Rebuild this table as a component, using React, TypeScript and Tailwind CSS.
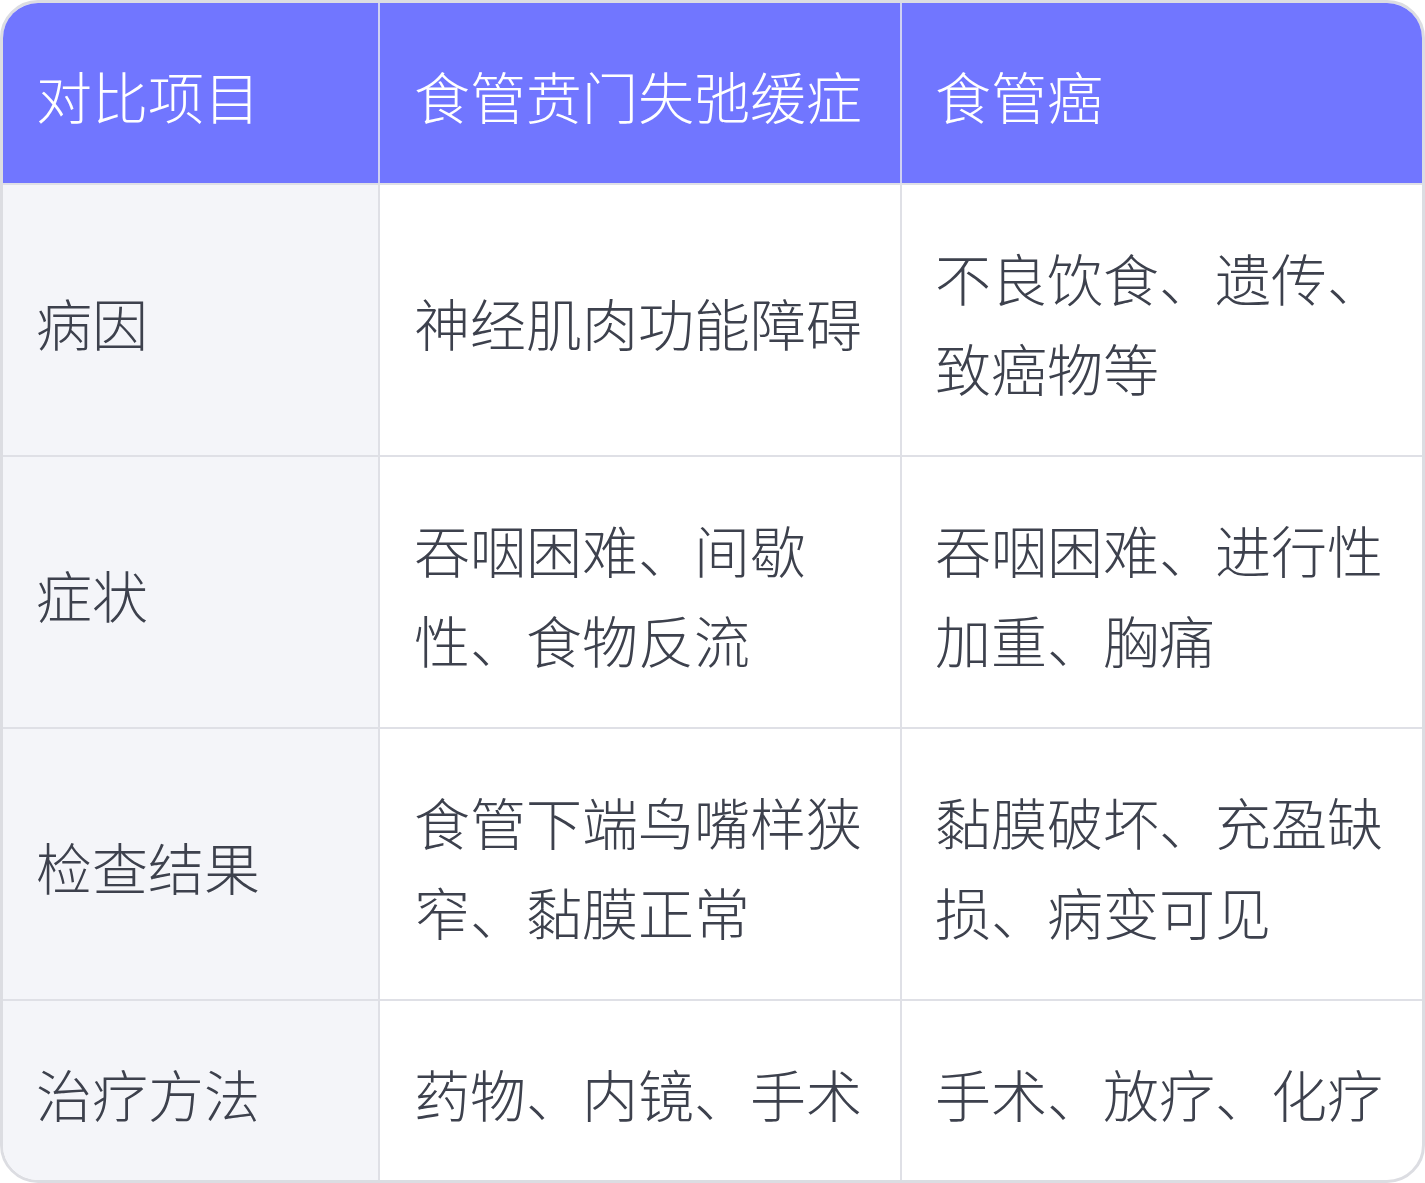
import React from "react";

const rows: [string, string, string][] = [
  ["病因", "神经肌肉功能障碍", "不良饮食、遗传、致癌物等"],
  ["症状", "吞咽困难、间歇性、食物反流", "吞咽困难、进行性加重、胸痛"],
  ["检查结果", "食管下端鸟嘴样狭窄、黏膜正常", "黏膜破坏、充盈缺损、病变可见"],
  ["治疗方法", "药物、内镜、手术", "手术、放疗、化疗"],
];

export default function App() {
  return (
    <div
      className="w-[1425px] h-[1183px] bg-white"
      style={{ fontFamily: '"Noto Sans CJK SC", "Noto Sans", sans-serif' }}
    >
      <div className="h-full border-[3px] border-[#dcdde2] rounded-[38px] overflow-hidden grid grid-cols-[375px_2px_520px_2px_1fr] grid-rows-[180px_2px_270px_2px_270px_2px_270px_2px_1fr] text-[56px] leading-[90px] font-light">
        <div className="bg-[#7176ff] text-white flex items-center pl-[33px] pt-[4px]">对比项目</div>
        <div className="bg-[#cfd1f3]" />
        <div className="bg-[#7176ff] text-white flex items-center pl-[34px] pt-[4px]">食管贲门失弛缓症</div>
        <div className="bg-[#cfd1f3]" />
        <div className="bg-[#7176ff] text-white flex items-center pl-[33px] pt-[4px]">食管癌</div>
        {rows.map((r, i) => (
          <React.Fragment key={i}>
            <div className="col-span-5 bg-[#dfe0e6]" />
            <div className="bg-[#f4f5f9] text-[#3d414d] flex items-center pl-[33px] pt-[4px]">{r[0]}</div>
            <div className="bg-[#dfe0e6]" />
            <div className="text-[#3d414d] flex items-center pl-[34px] pr-[30px] pt-[4px]">
              <span>{r[1]}</span>
            </div>
            <div className="bg-[#dfe0e6]" />
            <div className="text-[#3d414d] flex items-center pl-[33px] pr-[30px] pt-[4px]">
              <span>{r[2]}</span>
            </div>
          </React.Fragment>
        ))}
      </div>
    </div>
  );
}
